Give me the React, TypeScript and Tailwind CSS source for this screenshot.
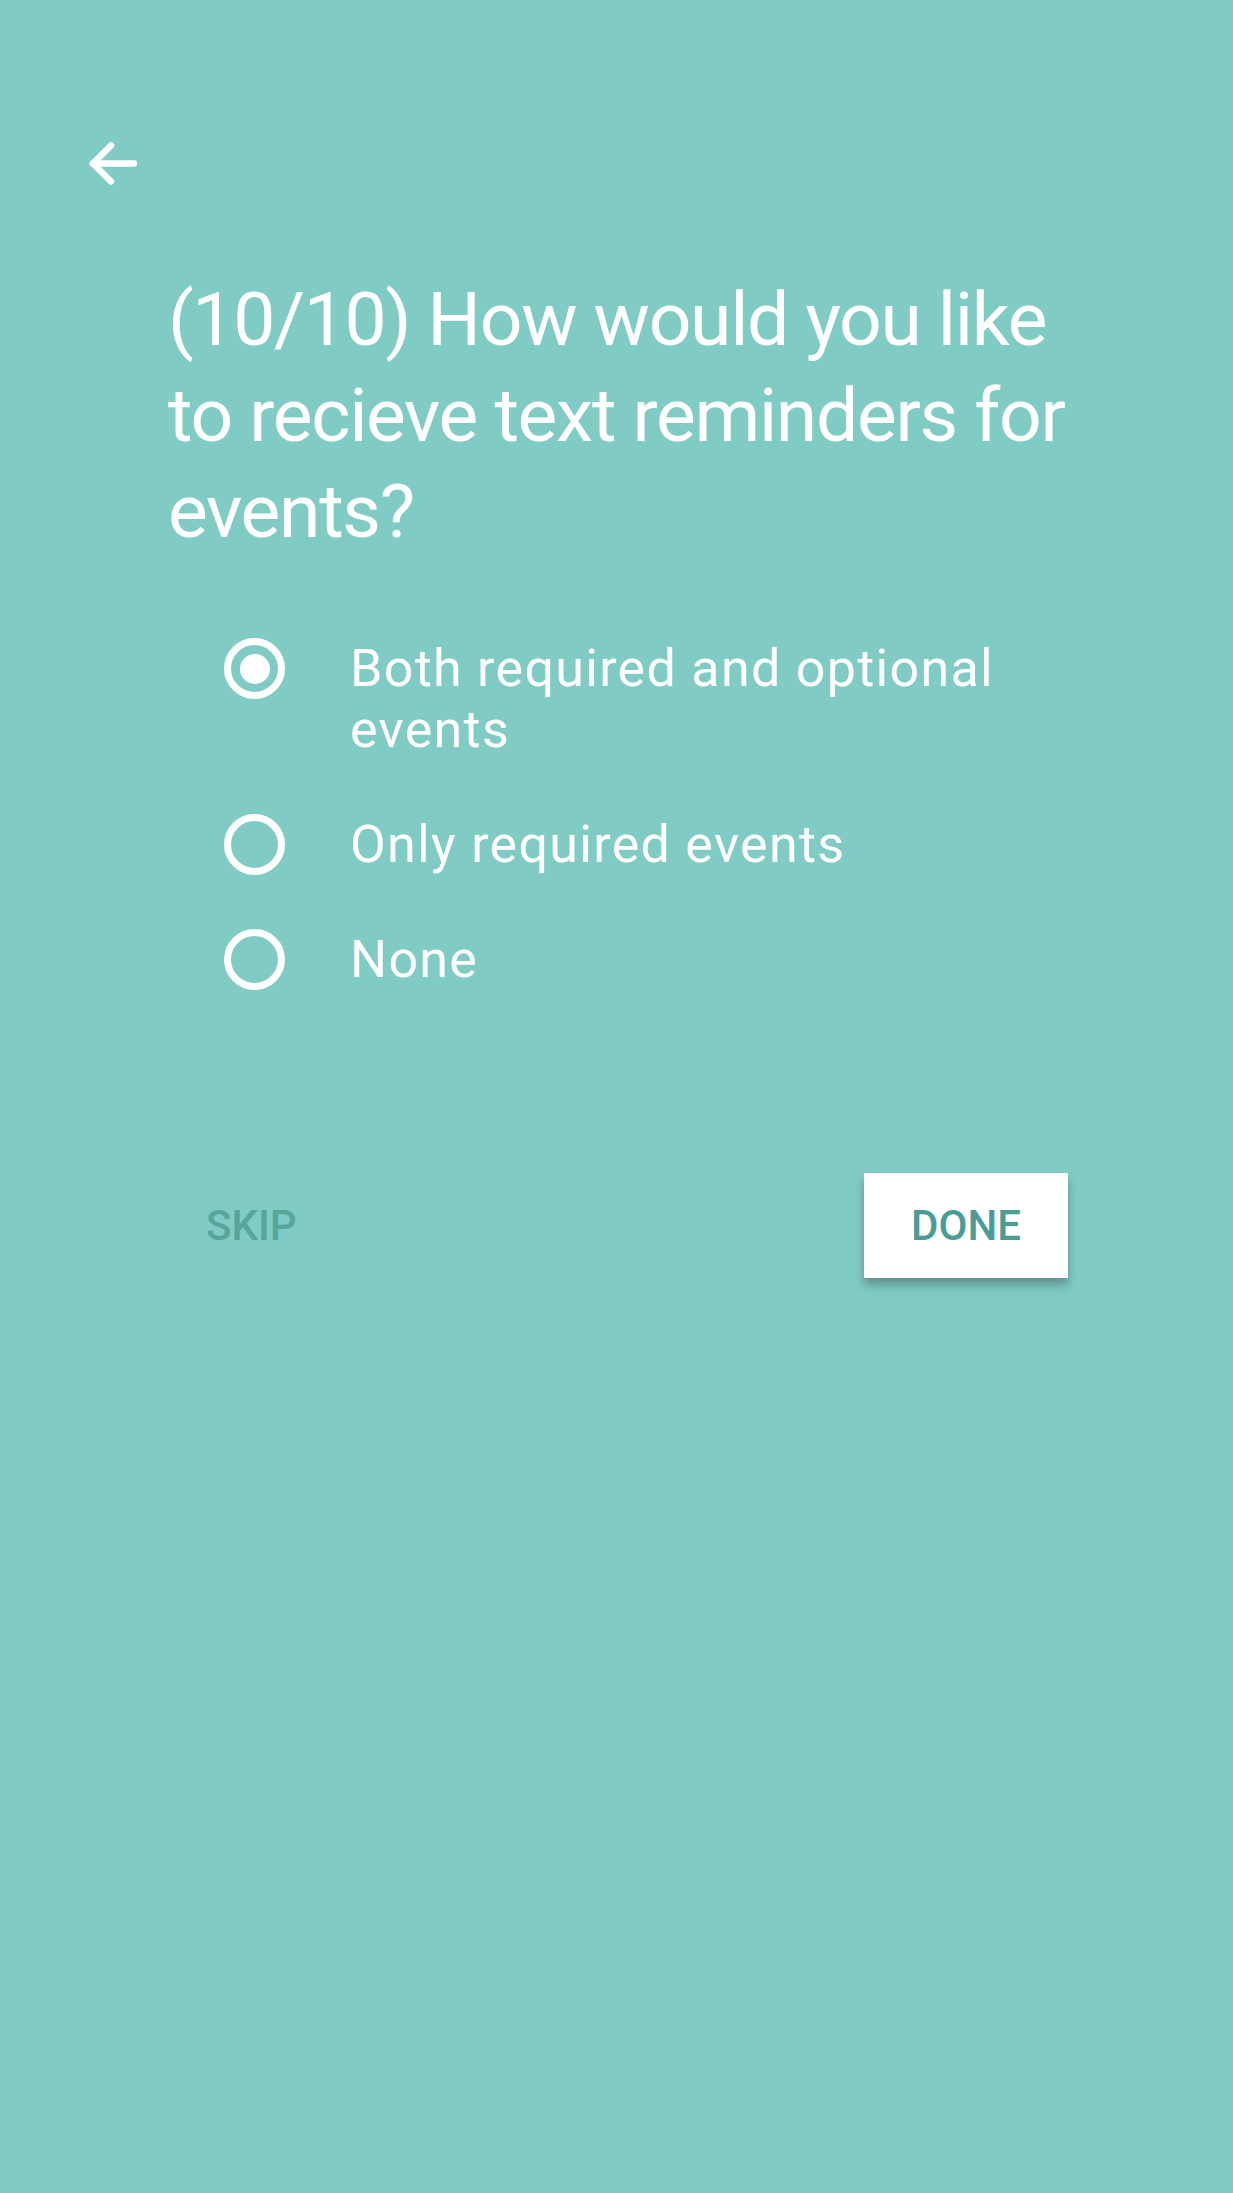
import React from 'react';

const options = ['Both required and optional events', 'Only required events', 'None'];

function Radio({ checked }: { checked: boolean }) {
  return (
    <div className="flex h-[61px] w-[61px] shrink-0 items-center justify-center rounded-full border-[7px] border-white">
      {checked && <div className="h-[30px] w-[30px] rounded-full bg-white" />}
    </div>
  );
}

export default function App() {
  const selected = 0;

  return (
    <div className="min-h-[2193px] w-full bg-[#80cbc4] font-['Roboto',sans-serif] text-white">
      {/* back */}
      <div className="pl-[86px] pt-[140px]">
        <svg width="52" height="48" viewBox="0 0 52 48" fill="none" stroke="white" strokeWidth="6.5" strokeLinecap="round" strokeLinejoin="round">
          <path d="M7 23.5H48" />
          <path d="M25 5.5L7 23.5L25 41.5" />
        </svg>
      </div>

      <h1 className="ml-[168px] mt-[83px] w-[920px] text-[75px] font-normal leading-[96px] tracking-[-1.3px]">
        (10/10) How would you like to recieve text reminders for events?
      </h1>

      <div className="ml-[224px] mt-[79px] flex flex-col gap-[54px]">
        {options.map((label, i) => (
          <div key={label} className="flex items-start gap-[65px]">
            <Radio checked={i === selected} />
            <span className="w-[715px] text-[52px] leading-[61px] tracking-[1.3px]">{label}</span>
          </div>
        ))}
      </div>

      <div className="ml-[168px] mt-[183px] flex w-[900px] items-center justify-between">
        <button className="flex h-[105px] items-center px-[38px] text-[42px] font-medium text-[#58a59c]">
          SKIP
        </button>
        <button className="flex h-[105px] w-[204px] items-center justify-center bg-white text-[42px] font-medium text-[#4a9d94] shadow-[0_7px_9px_rgba(0,0,0,0.28)]">
          DONE
        </button>
      </div>
    </div>
  );
}
